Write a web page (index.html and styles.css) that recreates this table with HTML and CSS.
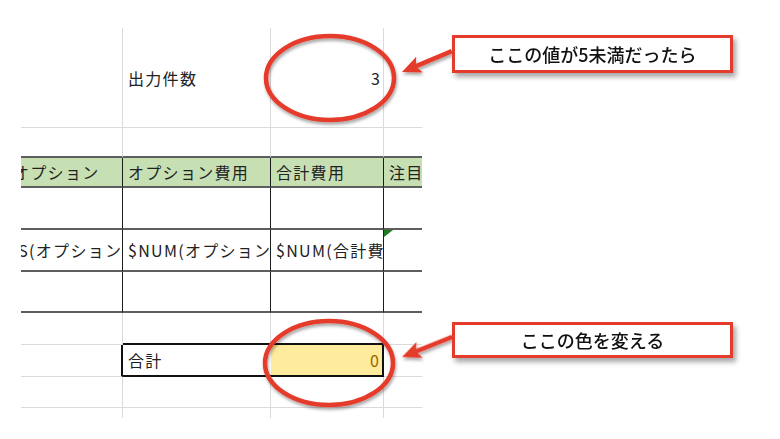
FILE: index.html
```html
<!DOCTYPE html>
<html lang="ja">
<head>
    <meta charset="UTF-8">
    <meta name="viewport" content="width=device-width, initial-scale=1.0">
    <title>条件付き書式</title>
    <link rel="stylesheet" href="styles.css">
</head>
<body>
    <div class="page">
        <div class="sheet-wrap">
            <table class="sheet">
                <colgroup>
                    <col class="col-a">
                    <col class="col-b">
                    <col class="col-c">
                    <col class="col-d">
                </colgroup>
                <tr class="r1">
                    <td></td>
                    <td>出力件数</td>
                    <td class="num">3</td>
                    <td></td>
                </tr>
                <tr class="r2">
                    <td></td><td></td><td></td><td></td>
                </tr>
                <tr class="r3 head">
                    <td><span class="shift-head">オプション</span></td>
                    <td>オプション費用</td>
                    <td>合計費用</td>
                    <td>注目</td>
                </tr>
                <tr class="r4 boxed">
                    <td></td><td></td><td></td><td></td>
                </tr>
                <tr class="r5 boxed">
                    <td><span class="shift-body">$OPTIONS(オプション)</span></td>
                    <td>$NUM(オプション費用)</td>
                    <td>$NUM(合計費用)</td>
                    <td class="flag"></td>
                </tr>
                <tr class="r6 boxed">
                    <td></td><td></td><td></td><td></td>
                </tr>
                <tr class="r7">
                    <td></td><td class="box-top"></td><td class="box-top"></td><td></td>
                </tr>
                <tr class="r8">
                    <td class="box-left"></td>
                    <td class="total-label">合計</td>
                    <td class="num total-value">0</td>
                    <td></td>
                </tr>
                <tr class="r9">
                    <td></td><td></td><td></td><td></td>
                </tr>
                <tr class="r10">
                    <td></td><td></td><td></td><td></td>
                </tr>
            </table>
        </div>

        <!-- annotations drawn on top of the sheet -->
        <svg class="marks" width="780" height="439" viewBox="0 0 780 439">
            <defs>
                <filter id="shade" x="-20%" y="-20%" width="140%" height="150%">
                    <feDropShadow dx="1" dy="2.5" stdDeviation="1.6" flood-color="#000" flood-opacity="0.35"/>
                </filter>
            </defs>
            <g filter="url(#shade)" fill="none" stroke="#e53b2c" stroke-width="4.5">
                <ellipse cx="330" cy="78" rx="64" ry="42"/>
                <ellipse cx="329" cy="363" rx="64" ry="42"/>
            </g>
            <g filter="url(#shade)" fill="#e53b2c">
                <polygon transform="translate(402 72) rotate(-22.8)" points="0,0 19,-8.5 16,-2.3 54,-2.3 54,2.3 16,2.3 19,8.5"/>
                <polygon transform="translate(402 357) rotate(-21.8)" points="0,0 19,-8.5 16,-2.3 54,-2.3 54,2.3 16,2.3 19,8.5"/>
            </g>
        </svg>

        <div class="callout callout-top">ここの値が5未満だったら</div>
        <div class="callout callout-bottom">ここの色を変える</div>
    </div>
</body>
</html>
```

FILE: styles.css
```css
* {
    margin: 0;
    padding: 0;
    box-sizing: border-box;
}

body {
    font-family: "Noto Sans CJK JP", sans-serif;
    background-color: #fff;
    color: #222;
}

.page {
    position: relative;
    width: 780px;
    height: 439px;
    overflow: hidden;
    padding: 28px 0 0 21px;
}

.sheet-wrap {
    width: 401px;
    overflow: hidden;
}

.sheet {
    border-collapse: separate;
    border-spacing: 0;
    table-layout: fixed;
    width: 401px;
    font-size: 16px;
    letter-spacing: 1.3px;
}

.col-a { width: 102px; }
.col-b { width: 148px; }
.col-c { width: 113px; }
.col-d { width: 38px; }

.sheet td {
    padding: 0 4px 0 5px;
    white-space: nowrap;
    overflow: hidden;
    border-right: 1px solid #dadada;
    border-bottom: 1px solid #dadada;
    vertical-align: middle;
    line-height: 20px;
}

.sheet td:last-child {
    border-right: none;
}

.sheet td.num {
    text-align: right;
    padding-right: 3px;
    letter-spacing: 0;
}

.r1 { height: 100px; }
.r2 { height: 30px; }
.r3 { height: 30px; }
.r4 { height: 42px; }
.r5 { height: 42px; }
.r6 { height: 41px; }
.r7 { height: 32px; }
.r8 { height: 32px; }
.r9 { height: 31px; }
.r10 { height: 10px; }

.r2 td {
    border-bottom: 2px solid #5e5e5e;
}

.head td {
    background-color: #c6e0b4;
    border-right: 1px solid #1c1c1c;
    border-bottom: 2px solid #5e5e5e;
}

.boxed td {
    border-right: 1px solid #1c1c1c;
    border-bottom: 2px solid #5e5e5e;
}

.head td:last-child,
.boxed td:last-child {
    border-right: none;
}

.shift-head {
    display: inline-block;
    margin-left: -13px;
}

.shift-body {
    display: inline-block;
    margin-left: -85px;
}

.flag {
    position: relative;
}

.flag::before {
    content: "";
    position: absolute;
    left: 0;
    top: 0;
    border-top: 7px solid #1e7b22;
    border-right: 9px solid transparent;
}

.sheet td.box-top {
    border-bottom: 2px solid #111;
}

.sheet td.box-left {
    border-right: 2px solid #111;
}

.sheet td.total-label {
    border-right: none;
    border-bottom: 2px solid #111;
}

.sheet td.total-value {
    background-color: #ffeb9c;
    color: #9c6500;
    border-right: 2px solid #111;
    border-bottom: 2px solid #111;
}

.r10 td {
    border-bottom: none;
}

.marks {
    position: absolute;
    left: 0;
    top: 0;
    pointer-events: none;
}

.callout {
    position: absolute;
    left: 452px;
    width: 281px;
    display: flex;
    align-items: center;
    justify-content: center;
    background-color: #fff;
    border: 3px solid #e53b2c;
    box-shadow: 3px 4px 5px rgba(0, 0, 0, 0.35);
    font-size: 18px;
    font-weight: 500;
    color: #111;
}

.callout-top {
    top: 35px;
    height: 38px;
}

.callout-bottom {
    top: 322px;
    height: 36px;
}
```
